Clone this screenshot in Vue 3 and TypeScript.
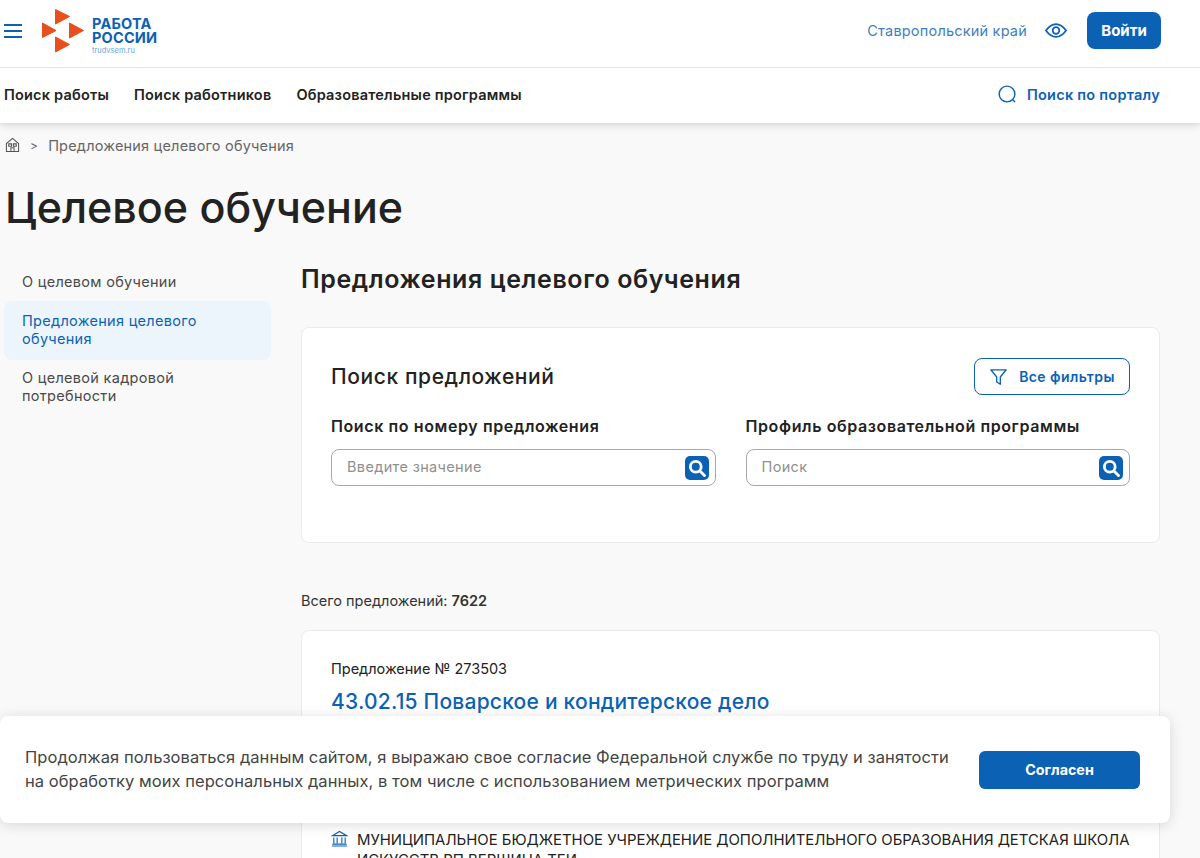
<script setup lang="ts">
const navItems: string[] = ['Поиск работы', 'Поиск работников', 'Образовательные программы']
const sideItems = [
  { label: 'О целевом обучении', active: false },
  { label: 'Предложения целевого обучения', active: true },
  { label: 'О целевой кадровой потребности', active: false },
]
const fields = [
  { label: 'Поиск по номеру предложения', placeholder: 'Введите значение' },
  { label: 'Профиль образовательной программы', placeholder: 'Поиск' },
]
</script>

<template>
  <div class="page">
    <header class="header">
      <div class="top">
        <button class="burger" aria-label="Меню"><span></span><span></span><span></span></button>
        <div class="logo">
          <svg class="logo-mark" viewBox="0 0 43 44" width="43" height="44" fill="#e94e1d" stroke="#e94e1d" stroke-width="1" stroke-linejoin="round">
            <path d="M13.500 .5 L27.500 7.500 L13.500 15 Z" />
            <path d="M.5 14 L14 21.500 L.5 28.500 Z" />
            <path d="M27.500 14 L41.500 21.500 L27.500 29 Z" />
            <path d="M13.500 28 L27.500 35.500 L13.500 43 Z" />
          </svg>
          <div class="logo-text">
            <div class="logo-name">РАБОТА<br />РОССИИ</div>
            <div class="logo-site">trudvsem.ru</div>
          </div>
        </div>
        <div class="top-right">
          <span class="region">Ставропольский край</span>
          <svg class="eye" viewBox="0 0 24 16" width="22" height="15" fill="none" stroke="#0b62b5" stroke-width="1.900">
            <path d="M1 8 C5 2.500 8.500 1 12 1 C15.500 1 19 2.500 23 8 C19 13.500 15.500 15 12 15 C8.500 15 5 13.500 1 8 Z" />
            <circle cx="12" cy="8" r="3.600" />
          </svg>
          <button class="login">Войти</button>
        </div>
      </div>
      <nav class="nav">
        <a v-for="item in navItems" :key="item" class="nav-link">{{ item }}</a>
        <div class="portal">
          <svg viewBox="0 0 20 20" width="19" height="19" fill="none" stroke="#0b62b5" stroke-width="1.500">
            <circle cx="9.500" cy="9.500" r="8.300" />
            <path d="M15.500 15.500 L18 18" />
          </svg>
          <span>Поиск по порталу</span>
        </div>
      </nav>
    </header>

    <main class="main">
      <div class="crumbs">
        <svg viewBox="0 0 16 16" width="15" height="16" fill="none" stroke="#555" stroke-width="1.100">
          <path d="M1.500 15 V6.500 L8 1 L14.500 6.500 V15 Z" />
          <path d="M6.300 15 V11 H9.700 V15" />
          <path d="M4 6.800 H7 V9.300 H4 Z M9 6.800 H12 V9.300 H9 Z" />
        </svg>
        <span class="sep">&gt;</span>
        <span>Предложения целевого обучения</span>
      </div>
      <h1 class="title">Целевое обучение</h1>

      <div class="columns">
        <aside class="side">
          <a v-for="s in sideItems" :key="s.label" class="side-item" :class="{ active: s.active }">{{ s.label }}</a>
        </aside>

        <section class="content">
          <h2 class="subtitle">Предложения целевого обучения</h2>

          <div class="card search">
            <div class="search-head">
              <h3 class="search-title">Поиск предложений</h3>
              <button class="filters">
                <svg viewBox="0 0 20 20" width="19" height="18" fill="none" stroke="#0b62b5" stroke-width="1.500" stroke-linejoin="round">
                  <path d="M1.500 2 H18.500 L12 10 V18 L8 15.500 V10 Z" />
                </svg>
                Все фильтры
              </button>
            </div>
            <div class="fields">
              <div v-for="f in fields" :key="f.label" class="field">
                <label class="field-label">{{ f.label }}</label>
                <div class="input">
                  <span class="placeholder">{{ f.placeholder }}</span>
                  <span class="input-btn">
                    <svg viewBox="0 0 24 24" width="20" height="20" fill="none" stroke="#fff" stroke-width="3.400">
                      <circle cx="10.500" cy="10.500" r="6.500" />
                      <path d="M15.500 15.500 L21 21" stroke-linecap="round" />
                    </svg>
                  </span>
                </div>
              </div>
            </div>
          </div>

          <p class="total">Всего предложений: <b>7622</b></p>

          <article class="card offer">
            <div class="offer-num">Предложение № 273503</div>
            <a class="offer-title">43.02.15 Поварское и кондитерское дело</a>
            <div class="offer-org">
              <svg viewBox="0 0 18 18" width="17" height="17" fill="none" stroke="#0b62b5" stroke-width="1.200">
                <path d="M1.500 6 L9 1.500 L16.500 6 Z" />
                <path d="M3 8 V14 M6.500 8 V14 M11.500 8 V14 M15 8 V14 M1.500 15 H16.500 M1 17 H17" />
              </svg>
              <span>МУНИЦИПАЛЬНОЕ БЮДЖЕТНОЕ УЧРЕЖДЕНИЕ ДОПОЛНИТЕЛЬНОГО ОБРАЗОВАНИЯ ДЕТСКАЯ ШКОЛА ИСКУССТВ РП ВЕРШИНА ТЕИ</span>
            </div>
          </article>
        </section>
      </div>
    </main>

    <div class="cookie">
      <p class="cookie-text">Продолжая пользоваться данным сайтом, я выражаю свое согласие Федеральной службе по труду и занятости на обработку моих персональных данных, в том числе с использованием метрических программ</p>
      <button class="agree">Согласен</button>
    </div>
  </div>
</template>

<style>
html, body { margin: 0; overflow: hidden; background: #f9f9f9; }
</style>

<style scoped>
.page {
  height: 858px;
  overflow: hidden;
  position: relative;
  background: #f9f9f9;
  color: #222;
  font-family: Inter, "Noto Sans", sans-serif;
}
.header { background: #fff; box-shadow: 0 2px 8px rgba(0, 0, 0, .16); position: relative; }
.top {
  height: 67px;
  display: flex;
  align-items: center;
  padding: 0 39px 0 4px;
  border-bottom: 1px solid #e6e6e6;
}
.burger { width: 18px; height: 14px; margin-top: -6px; padding: 0; border: 0; background: none; display: flex; flex-direction: column; justify-content: space-between; }
.burger span { height: 2px; background: #0b62b5; display: block; }
.logo { display: flex; align-items: flex-start; margin-left: 20px; margin-top: -3px; gap: 7px; }
.logo-mark { display: block; }
.logo-text { padding-top: 8px; }
.logo-name { color: #0b62b5; font-weight: 700; font-size: 14.500px; line-height: 14.500px; letter-spacing: .2px; }
.logo-site { color: #6aa6e0; font-size: 7.500px; line-height: 10px; }
.top-right { margin-left: auto; display: flex; align-items: center; margin-top: -6px; }
.region { color: #3f7fbf; font-size: 14.500px; letter-spacing: .2px; }
.eye { margin-left: 18px; }
.login {
  margin-left: 20px;
  width: 74px; height: 37px;
  border: 0; border-radius: 8px;
  background: #0b62b5; color: #fff;
  font: 700 15px Inter, sans-serif;
}
.nav { height: 53px; padding-bottom: 2px; display: flex; align-items: center; padding-left: 4px; padding-right: 40px; gap: 25px; }
.nav-link { font-size: 14.500px; letter-spacing: .2px; font-weight: 600; color: #222; }
.portal { margin-left: auto; display: flex; align-items: center; gap: 10px; color: #0b62b5; font-size: 14.500px; letter-spacing: .25px; font-weight: 600; }
.portal svg { display: block; }

.main { padding: 0 40px 0 4px; }
.crumbs { display: flex; align-items: center; height: 44px; color: #666; font-size: 14.500px; letter-spacing: .2px; }
.crumbs svg { margin-left: 1px; }
.sep { margin: 0 10px 0 10px; font-size: 12px; }
.title { margin: 15px 0 0 1px; font-size: 43px; line-height: 50px; font-weight: 500; color: #222; }
.columns { display: flex; margin-top: 31px; }
.side { width: 267px; margin-top: 1px; flex: none; display: flex; flex-direction: column; }
.side-item { padding: 9px 18px 10px; font-size: 14.500px; letter-spacing: .3px; line-height: 18px; color: #4a4a4a; border-radius: 8px; }
.side-item.active { padding: 11px 18px 12px; background: #edf5fc; color: #0b62b5; }
.content { margin-left: 30px; flex: 1; min-width: 0; }
.subtitle { margin: 0; font-size: 25px; letter-spacing: .6px; line-height: 32px; font-weight: 600; color: #222; }
.card { background: #fff; border: 1px solid #ebebeb; border-radius: 8px; }
.search { margin-top: 32px; height: 216px; box-sizing: border-box; padding: 30px 29px 0; }
.search-head { display: flex; align-items: center; justify-content: space-between; height: 37px; }
.search-title { margin: 0; font-size: 21px; letter-spacing: .6px; font-weight: 500; color: #222; }
.filters {
  width: 156px; height: 37px;
  display: flex; align-items: center; justify-content: center; gap: 11px;
  background: #fff; border: 1px solid #0b62b5; border-radius: 8px;
  color: #0b62b5; font: 600 14px Inter, sans-serif; letter-spacing: .4px;
}
.fields { display: grid; grid-template-columns: 1fr 1fr; gap: 30px; margin-top: 21px; }
.field-label { display: block; font-size: 16px; letter-spacing: .6px; line-height: 20px; font-weight: 600; color: #222; }
.input {
  margin-top: 13px;
  height: 37px; box-sizing: border-box;
  border: 1px solid #a8a8a8; border-radius: 8px;
  display: flex; align-items: center; justify-content: space-between;
  padding: 0 6px 0 15px;
  color: #8f8f8f; font-size: 14.500px; letter-spacing: .35px;
}
.placeholder { margin-top: -2px; }
.input-btn { width: 24px; height: 24px; border-radius: 5px; background: #0b62b5; display: flex; align-items: center; justify-content: center; }
.total { margin: 49px 0 0; font-size: 14.500px; line-height: 18px; color: #333; }
.total b { font-weight: 600; }
.offer { margin-top: 20px; padding: 29px 29px 40px; }
.offer-num { font-size: 14.500px; line-height: 18px; color: #222; }
.offer-title { display: block; margin-top: 11px; color: #0b62b5; font-size: 21px; letter-spacing: .22px; line-height: 26px; font-weight: 500; }
.offer-org { display: flex; gap: 9px; margin-top: 115px; font-size: 14.900px; line-height: 20px; color: #222; }
.offer-org svg { flex: none; }

.cookie {
  position: absolute;
  left: 0; top: 716px;
  width: 1170px; height: 107px;
  box-sizing: border-box;
  padding: 0 30px 0 25px;
  display: flex; align-items: center; justify-content: space-between;
  background: #fff;
  border-radius: 8px;
  box-shadow: 0 2px 14px rgba(0, 0, 0, .14);
}
.cookie-text { margin: 0; width: 930px; font-size: 16.500px; letter-spacing: .05px; line-height: 23.500px; color: #444; }
.agree {
  width: 161px; height: 38px;
  border: 0; border-radius: 6px;
  background: #0b62b5; color: #fff;
  font: 700 14.300px Inter, sans-serif;
}
</style>
